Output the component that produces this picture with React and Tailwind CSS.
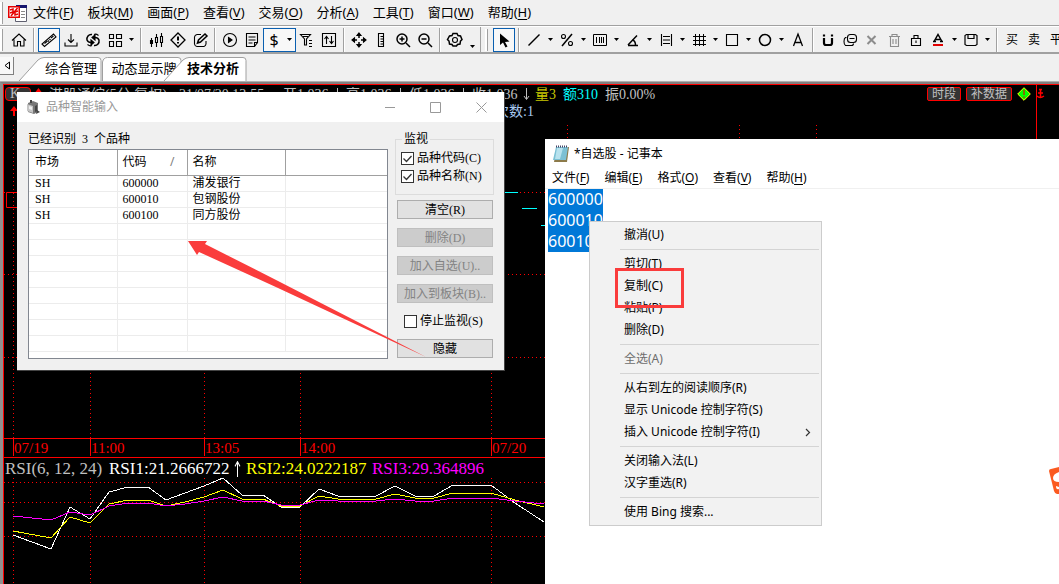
import React from "react";
import clsx from "clsx";

const MENUS = [
  ["文件", "F"],
  ["板块", "M"],
  ["画面", "P"],
  ["查看", "V"],
  ["交易", "O"],
  ["分析", "A"],
  ["工具", "T"],
  ["窗口", "W"],
  ["帮助", "H"],
];

const NOTEPAD_MENUS = [
  ["文件", "F"],
  ["编辑", "E"],
  ["格式", "O"],
  ["查看", "V"],
  ["帮助", "H"],
];

const STOCKS = [
  ["SH", "600000", "浦发银行"],
  ["SH", "600010", "包钢股份"],
  ["SH", "600100", "同方股份"],
];

const EMPTY_ROWS = 8;

const CONTEXT_MENU = [
  [{ label: "撤消(U)" }],
  [{ label: "剪切(T)" }, { label: "复制(C)" }, { label: "粘贴(P)" }, { label: "删除(D)" }],
  [{ label: "全选(A)", disabled: true }],
  [{ label: "从右到左的阅读顺序(R)" }, { label: "显示 Unicode 控制字符(S)" }, { label: "插入 Unicode 控制字符(I)", sub: true }],
  [{ label: "关闭输入法(L)" }, { label: "汉字重选(R)" }],
  [{ label: "使用 Bing 搜索..." }],
];

const RSI1 = "13,535 51,549 70,507 90,519 109,492 128,487 148,487 166,500 185,493 204,486 223,478 242,495 263,495 281,507 300,507 319,489 338,496 376,496 395,486 415,496 434,496 453,485 491,485 515,503 544,522";
const RSI2 = "13,531 51,538 70,517 90,523 109,504 128,500 148,500 166,506 185,502 204,497 223,490 242,499 263,499 281,506 300,506 319,496 338,499 376,499 395,494 415,498 434,498 453,493 491,493 515,500 544,507";
const RSI3 = "13,516 51,520 70,512 90,515 109,506 128,503 148,503 166,506 185,504 204,501 223,497 242,501 263,501 281,505 300,505 319,500 338,501 376,501 395,499 415,501 434,501 453,498 491,498 515,501 544,504";

const TIMES = [
  [13, "07/19"],
  [90, "11:00"],
  [204, "13:05"],
  [300, "14:00"],
  [491, "07/20"],
];

// 18x18 toolbar glyphs
const ICONS = {
  home: <path d="M2 9.500 9 3l7 6.500M4 8.500V15h3.500v-4.500h3V15H14V8.500" />,
  link: <><path d="m2 13 2.500 2.500L16 6l-2.500-3z" /><path d="m4.500 12.500 3-2.500M8 9.500l1 1M9.500 8l1 1M11 7l2.500-2" /></>,
  download: <path d="M9 3v8M6 8.500 9 11.500l3-3M3 11.500v3.500h12v-3.500" />,
  refresh: <><path strokeWidth="1.500" d="M8 3.500C4.500 3 2.500 6 3 9q1 2.500 4 2.500M10 14.500c3.500.5 5.500-2.500 5-5.500q-1-2.500-4-2.500" /><path fill="currentColor" d="m7 9 3 2.500L7 14zM11 4 8 6.500 11 9z" /><path d="M10 3.500q2-1 4.500 1M8 14.500q-2 1-4.500-1" /></>,
  grid: <path d="M3.500 3.500h4v4h-4zM10.500 3.500h5v4h-5zM3.500 10.500h4v5h-4zM10.500 10.500h5v5h-5z" />,
  candles: <><path d="M4.500 7v9M9.500 3v3M9.500 12v4M14.500 2v3M14.500 12v4" /><path d="M8.500 6.500h2v5h-2zM13.500 5.500h2v6h-2z" /><path fill="currentColor" d="M3.500 9.500h2v3h-2z" /></>,
  alert: <><path d="m9 2 7 7-7 7-7-7z" strokeWidth="1.300" /><path d="M9 5.500v4M9 11v1.500" strokeWidth="2" /></>,
  edit: <><path d="M10 3.500H6A3 3 0 0 0 3.500 6v7A3 3 0 0 0 6 15.500h7A3 3 0 0 0 15 13v-3" /><path strokeWidth="1.500" d="m6.500 12 1-3L14 3l2 2-6.500 6z" /></>,
  play: <><circle cx="9" cy="9" r="6.500" /><path fill="currentColor" d="m7.500 6.500 3.500 2.500-3.500 2.500z" /></>,
  note: <path d="M3.500 2.500h11v9l-3 4h-8zM5.500 6h7M5.500 9h7M5.500 12h4M11.500 15v-3.500h3" />,
  filter: <path d="M2.500 3.500h10l-4 4.500v6h-2V8zM5 5.500h5M11 9.500h3M11 12.500h3M11 15.500h3" />,
  updown: <><path d="M2.500 2.500h13v13h-13z" /><path d="M6.500 13V5.500M4.500 8l2-2.500L8.500 8M11.500 5v7.500M9.500 10l2 2.500 2-2.500" /></>,
  move: <><path d="M9 3v4M9 11v4M3 9h4M11 9h4" strokeWidth="1.500" /><path fill="currentColor" d="m9 2 2 2.500H7zM9 16l2-2.500H7zM2 9l2.500-2v4zM16 9l-2.500-2v4z" /></>,
  ruler: <path d="M6.500 2.500h5v13h-5zM8.500 5.500h3M8.500 8h3M8.500 10.500h3M8.500 13h3" />,
  zoomIn: <><circle cx="8" cy="8" r="5" strokeWidth="1.500" /><path d="M5.500 8h5M8 5.500v5M12 12l4 4" strokeWidth="1.500" /></>,
  zoomOut: <><circle cx="8" cy="8" r="5" strokeWidth="1.500" /><path d="M5.500 8h5M12 12l4 4" strokeWidth="1.500" /></>,
  gear: <><path strokeWidth="1.500" d="M7 2.500h4l1 2 2.500.5 1.500 3.500-1.500 1.500-.5 3-2.500.5-1 1.500H7l-1-1.500-2.500-.5-.5-3L1.500 8.500 3.500 5 6 4.500z" /><circle cx="9" cy="9" r="2.500" /></>,
  pointer: <path fill="currentColor" stroke="none" d="M5 2.500v11.500l3-2.500 2.500 5 2-1-2.500-4.500 4.500-.5z" />,
  line: <path strokeWidth="1.500" d="M3.500 14.500 14.500 3.500" />,
  percent: <><circle cx="5.500" cy="5.500" r="2" /><circle cx="12.500" cy="12.500" r="2" /><path strokeWidth="1.500" d="M4 15 14 3" /></>,
  bars: <path strokeWidth="1" d="M2.500 3.500h13v11h-13zM5.500 6v6M8.500 6v6M10.500 6v6M12.500 6v6" />,
  angle: <><path strokeWidth="1.500" d="M4 14.500h10M4 14l9-9.500" /><path strokeWidth="1.500" d="M8.500 9q3 1 3 5" /></>,
  channel: <path d="M4.500 3v12M14.500 3v12M6 5.500h7M6 9h7M6 12.500h7" />,
  hash: <path strokeWidth="1" d="M5.500 3v12M9.500 3v12M13.500 3v12M3 5.500h13M3 9.500h13M3 13.500h13" />,
  square: <path d="M3.500 3.500h11v11h-11z" />,
  circle: <circle cx="9" cy="9" r="5.500" strokeWidth="1.500" />,
  text: <path strokeWidth="1.300" d="m4.500 15 4.500-12 4.500 12M6 11.500h6" />,
  magnet: <><path strokeWidth="2.200" d="M5 7v5c0 1 1 2 2 2h4c1 0 2-1 2-2V7" /><path strokeWidth="2.200" d="M5 3.500v2M13 3.500v2" /></>,
  stack: <><rect x="6.500" y="3.500" width="9" height="8" rx="3" /><path d="M5.500 6.500h-1c-2 1-2 7 0 8h6c1 0 2-1 2-2M8.500 7.500h5" /></>,
  cross: <path strokeWidth="2" d="m4.500 5 8 8M12.500 5l-8 8" />,
  trash: <path d="M4 5.500h11M7 5V3.500h5V5M5.500 6v9.500h8V6M8 8v5M11 8v5" />,
  lock: <path d="M4.500 7.500h9v7h-9zM7 7V4.500h4V7M9 9.500V12" />,
  fontColor: <><path strokeWidth="1.500" d="m5 10.500 4-7 4 7M6.500 8.500h5M4 10.500h3M11 10.500h3" /><path stroke="#e00000" strokeWidth="2" d="M4 14h10" /></>,
  save: <path strokeWidth="1.200" d="M4.500 3.500h9l1.500 1v9l-1.500 1h-9l-1.500-1v-9zM6 4v3.500h6V4" />,
};

function Glyph({ name }) {
  return (
    <svg className="size-[18px] shrink-0" viewBox="0 0 18 18" fill="none" stroke="currentColor" strokeWidth="1.1">
      {ICONS[name]}
    </svg>
  );
}

function Caret({ low }) {
  return (
    <button type="button" aria-label="更多" className={clsx("flex h-6 shrink-0 justify-center", low ? "w-3 items-end pb-1" : "w-[11px] items-center")}>
      <svg className="h-[3px] w-[5px]" viewBox="0 0 5 3"><path d="M0 0h5L2.500 3z" /></svg>
    </button>
  );
}

function Tool({ icon, active, muted, caret, children }) {
  return (
    <>
      <button
        type="button"
        aria-label={icon}
        className={clsx(
          "flex h-6 w-[22px] shrink-0 items-center justify-center",
          active && "border border-[#0a5fb0] bg-[#f8f8f8]",
          muted ? "text-[#8c8c8c]" : "text-black"
        )}
      >
        {children ?? <Glyph name={icon} />}
      </button>
      {caret && <Caret />}
    </>
  );
}

function Sep() {
  return (
    <div className="flex w-2 shrink-0 justify-center">
      <div className="h-6 w-[2px] border-l border-[#a0a0a0] bg-white" />
    </div>
  );
}

function Grip() {
  return <div className="h-[22px] w-[3px] shrink-0 border-r border-[#a0a0a0] bg-white" />;
}

function MenuItem({ text, hotkey }) {
  return (
    <button type="button" className="shrink-0 whitespace-nowrap">
      {text}(<span className="underline underline-offset-2">{hotkey}</span>)
    </button>
  );
}

function MenuBar() {
  return (
    <nav className="flex h-[26px] shrink-0 items-center border-b border-[#a0a0a0] text-[13px]">
      <div className="flex w-2 shrink-0"><Grip /></div>
      <svg className="h-5 w-[19px] shrink-0" viewBox="0 0 19 20">
        <path fill="#fff" stroke="#606070" d="M7.500 3.500h11v15h-11z" />
        <path fill="#16166e" d="M8 2h11v3H8z" />
        <path stroke="#888" d="M13 8.500h4M13 11.500h4M13 14.500h4" />
        <path fill="#e60000" d="M0 3h12v12H0z" />
        <path fill="#fff" d="M1.500 4.500h9v9h-9z" />
        <path fill="none" stroke="#e60000" strokeWidth="1.500" d="M3 13 9.500 5M2 7l3-1v3L2 10M10 8l-3 1v3l3-1" />
      </svg>
      <div className="flex gap-[14px] pl-[6px]">
        {MENUS.map(([t, k]) => <MenuItem key={t} text={t} hotkey={k} />)}
      </div>
    </nav>
  );
}

function Toolbar() {
  return (
    <div className="flex h-7 shrink-0 overflow-hidden border-b-2 border-[#a0a0a0] border-t border-t-white">
      <div className="flex shrink-0 items-center border-r border-[#a0a0a0] pr-[2px]">
        <div className="flex w-2 shrink-0"><Grip /></div>
        <Tool icon="home" />
        <Sep />
        <Tool icon="link" active />
        <Tool icon="download" />
        <Tool icon="refresh" />
        <Tool icon="grid" caret />
        <Sep />
        <Tool icon="candles" />
        <Tool icon="alert" />
        <Tool icon="edit" />
        <Sep />
        <Tool icon="play" />
        <Tool icon="note" />
        <div className="flex h-6 w-[33px] shrink-0 items-center border border-[#0a5fb0] bg-[#f8f8f8]">
          <button type="button" className="flex-1 text-base leading-4">$</button>
          <Caret />
        </div>
        <Tool icon="filter" />
        <Tool icon="updown" />
        <Sep />
        <Tool icon="move" />
        <Tool icon="ruler" />
        <Tool icon="zoomIn" />
        <Tool icon="zoomOut" />
        <Sep />
        <Tool icon="gear" />
        <Caret low />
      </div>
      <div className="flex shrink-0 items-center pl-1">
        <div className="flex w-2 shrink-0"><Grip /></div>
        <Tool icon="pointer" active />
        <Sep />
        <Tool icon="line" caret />
        <Tool icon="percent" caret />
        <Tool icon="bars" caret />
        <Tool icon="angle" caret />
        <Tool icon="channel" caret />
        <Tool icon="hash" caret />
        <Tool icon="square" caret />
        <Tool icon="circle" caret />
        <Tool icon="text" />
        <Sep />
        <Tool icon="magnet" />
        <Tool icon="stack" />
        <Tool icon="cross" muted />
        <Tool icon="trash" muted />
        <Tool icon="lock" />
        <Tool icon="fontColor" caret />
        <Tool icon="save" caret />
        <Sep />
        <Tool icon="buy"><span className="text-xs">买</span></Tool>
        <Tool icon="sell"><span className="text-xs">卖</span></Tool>
        <Tool icon="close"><span className="text-xs">平</span></Tool>
      </div>
    </div>
  );
}

function Tabs() {
  return (
    <div className="flex h-7 shrink-0 items-end border-b border-[#b0b0b0] text-[13px]">
      <button type="button" aria-label="向左" className="mb-[6px] flex h-[18px] w-[14px] shrink-0 items-center justify-center border-r border-b border-[#808080] bg-[#f8f8f8]">
        <svg className="h-[9px] w-[6px]" viewBox="0 0 6 9"><path fill="none" stroke="#000" d="M5.500 1v7L1 4.500z" /></svg>
      </button>
      <button type="button" className="relative ml-1 h-6 w-[84px] pl-[22px]">
        <svg className="absolute inset-0 h-full w-full" viewBox="0 0 84 24"><path fill="#fff" stroke="#a0a0a0" d="M1 24 20 3q3-2.500 6-2.500h54q3 0 3 3V24" /></svg>
        <span className="relative">综合管理</span>
      </button>
      <button type="button" className="relative h-6 w-20 whitespace-nowrap pl-1">
        <svg className="absolute inset-0 h-full w-full" viewBox="0 0 80 24"><path fill="#fff" stroke="#a0a0a0" d="M.5 24V5q1-4.500 5-4.500H76q3 0 3 3V24" /></svg>
        <span className="relative">动态显示牌</span>
      </button>
      <button type="button" className="relative -ml-[19px] h-6 w-[84px] pl-4 font-bold">
        <svg className="absolute inset-0 h-full w-full" viewBox="0 0 84 24"><path fill="#fff" stroke="#a0a0a0" d="M1 24 20 3q3-2.500 6-2.500h54q3 0 3 3V24" /></svg>
        <span className="relative">技术分析</span>
      </button>
    </div>
  );
}

function DotH({ y, from = 4, to = 1059 }) {
  return <line x1={from} x2={to} y1={y + 0.5} y2={y + 0.5} stroke="#f00" strokeDasharray="1 3" />;
}

function DotV({ x, from, to }) {
  return <line x1={x + 0.5} x2={x + 0.5} y1={from} y2={to} stroke="#f00" strokeDasharray="1 3" />;
}

function DownArrow({ up }) {
  return (
    <svg className={clsx("shrink-0", up ? "h-4 w-[7px] rotate-180" : "h-3 w-[7px]")} viewBox="0 0 7 12" preserveAspectRatio="none" fill="none" stroke="currentColor">
      <path d="M3.500 0v11M1 8l2.500 3.500L6 8" />
    </svg>
  );
}

function PriceField({ label }) {
  return (
    <span className="flex w-[63px] shrink-0 items-center whitespace-nowrap">
      <span className="w-[51px]">{label}1.036</span>
      <DownArrow />
    </span>
  );
}

function PricePane() {
  return (
    <section className="relative h-[353px] shrink-0">
      <svg className="absolute inset-0 h-full w-full" fill="none">
        <g transform="translate(-4 -85)">
          <DotH y={192} />
          <DotH y={274} />
          <DotH y={357} />
          {[13, 90, 204, 300, 491, 567, 739, 816].map((x) => <DotV key={x} x={x} from={125} to={438} />)}
          <path stroke="#f00" d="M1036.500 85v354M20 192.500H6.500v15H20" />
          <path stroke="#0ff" d="M504 192.500h14M522 208.500h15M541 225.500h8" />
          <path fill="#f00" d="m14 106 4 5h-3v5h-2v-5h-3z" />
        </g>
      </svg>
      <div className="relative flex h-[18px] items-center text-[14px] text-[#c0c0c0]">
        <button type="button" className="ml-[1px] h-[14px] w-[26px] shrink-0 rounded-sm border border-[#f00] bg-[#333] pl-1 text-left leading-3">K</button>
        <svg className="mx-[3px] h-3 w-[9px] shrink-0" viewBox="0 0 9 12"><path fill="#f00" d="m4.500 0 3 4h-6zM4.500 12l3-4h-6z" /></svg>
        <span className="w-[133px] shrink-0 whitespace-nowrap pl-[3px]">港股通综(5分 复权)</span>
        <span className="w-[104px] shrink-0 whitespace-nowrap">21/07/20 13:55</span>
        <PriceField label="开" />
        <PriceField label="高" />
        <PriceField label="低" />
        <PriceField label="收" />
        <span className="w-7 shrink-0 text-[#c8c800]">量3</span>
        <span className="w-[42px] shrink-0 text-[#0ff]">额310</span>
        <span className="shrink-0">振0.00%</span>
        <div className="ml-auto mr-[14px] flex shrink-0 items-center gap-[5px] text-xs">
          <button type="button" className="h-[14px] rounded-xs border border-[#f00] bg-[#333] px-1 leading-3">时段</button>
          <button type="button" className="h-[14px] rounded-xs border border-[#f00] bg-[#333] px-1 leading-3">补数据</button>
          <svg className="h-[14px] w-[14px]" viewBox="0 0 14 14">
            <path fill="#0f0" stroke="#ff0" d="m7 .7 6.300 6.300L7 13.300.7 7z" />
            <path stroke="#b04000" strokeWidth="1.500" d="M7 3v5M7 9.500V11" />
          </svg>
          <svg className="h-3 w-[9px]" viewBox="0 0 9 12" fill="none" stroke="#f00" strokeWidth="1.500">
            <path d="M4.500 2v8M2 5h5M1 8q3 3 7 0M3 1.500h3" />
          </svg>
        </div>
      </div>
      <div className="relative pl-[491px] text-[14px] leading-[18px] text-[#a8c8f0]">次数:1</div>
    </section>
  );
}

function TimeAxis() {
  return (
    <div className="relative h-5 shrink-0 border-y border-[#f00]">
      <svg className="absolute inset-0 h-full w-full">
        <g transform="translate(-4 0)">
          {TIMES.map(([x, label]) => (
            <g key={label}>
              <path stroke="#f00" d={`M${x + 0.5} 0v17`} />
              <text x={x + 1} y="14" fill="#f00" fontSize="15">{label}</text>
            </g>
          ))}
        </g>
      </svg>
    </div>
  );
}

function RsiPane() {
  return (
    <section className="relative min-h-0 flex-1">
      <svg className="absolute inset-0 h-full w-full" fill="none" shapeRendering="crispEdges">
        <g transform="translate(-4 -458)">
          <DotH y={482} />
          <DotH y={502} />
          <DotH y={536} />
          {TIMES.map(([x]) => <DotV key={x} x={x} from={478} to={584} />)}
          <polyline points={RSI1} stroke="#fff" />
          <polyline points={RSI2} stroke="#ff0" />
          <polyline points={RSI3} stroke="#f0f" />
        </g>
      </svg>
      <div className="relative flex h-[22px] items-center whitespace-nowrap pl-[1px] text-[17px]">
        <span className="w-[104px] shrink-0 text-[#c0c0c0]">RSI(6, 12, 24)</span>
        <span className="flex w-[137px] shrink-0 items-center justify-between pr-[5px] text-white">RSI1:21.2666722<DownArrow up /></span>
        <span className="w-[126px] shrink-0 text-[#ff0]">RSI2:24.0222187</span>
        <span className="text-[#f0f]">RSI3:29.364896</span>
      </div>
    </section>
  );
}

function StockTable() {
  return (
    <table className="w-full table-fixed border-collapse text-left text-xs leading-3">
      <colgroup>
        <col className="w-[88px]" />
        <col className="w-[70px]" />
        <col className="w-[98px]" />
        <col />
      </colgroup>
      <thead className="font-['Noto_Sans','Noto_Sans_CJK_SC',sans-serif]">
        <tr className="h-[25px] border-b border-[#a0a0a0]">
          <th className="border-r border-[#a0a0a0] p-0 pl-[6px] font-normal">市场</th>
          <th className="border-r border-[#a0a0a0] p-0 pl-[5px] font-normal">
            <span className="flex justify-between pr-3">代码<span className="text-[#808080]">/</span></span>
          </th>
          <th className="border-r border-[#a0a0a0] p-0 pl-[5px] font-normal">名称</th>
          <th className="p-0" />
        </tr>
      </thead>
      <tbody>
        {STOCKS.map(([market, code, name]) => (
          <tr key={code} className="h-4 border-b border-[#ececec]">
            <td className="border-r border-[#ececec] p-0 pl-[6px]">{market}</td>
            <td className="border-r border-[#ececec] p-0 pl-[5px]">{code}</td>
            <td className="border-r border-[#ececec] p-0 pl-[5px]">{name}</td>
            <td className="p-0" />
          </tr>
        ))}
        {Array.from({ length: EMPTY_ROWS }, (_, i) => (
          <tr key={i} className="h-4 border-b border-[#ececec]">
            <td className="border-r border-[#ececec] p-0" />
            <td className="border-r border-[#ececec] p-0" />
            <td className="border-r border-[#ececec] p-0" />
            <td className="p-0" />
          </tr>
        ))}
      </tbody>
    </table>
  );
}

function CheckBox({ label, checked }) {
  return (
    <label className="flex h-[18px] items-center gap-[3px] whitespace-nowrap">
      <span className="relative flex size-[13px] shrink-0">
        <input type="checkbox" defaultChecked={checked} className="peer size-[13px] appearance-none border border-[#333] bg-white" />
        <svg className="pointer-events-none absolute inset-0 hidden size-[13px] peer-checked:block" viewBox="0 0 13 13">
          <path fill="none" stroke="#333" strokeWidth="1.300" d="m2.500 6.500 3 3 5-5.500" />
        </svg>
      </span>
      {label}
    </label>
  );
}

function DialogButton({ children, disabled }) {
  return (
    <button
      type="button"
      disabled={disabled}
      className={clsx(
        "h-[19px] w-24 whitespace-nowrap border text-center text-xs leading-4",
        disabled ? "border-[#bfbfbf] bg-[#ccc] text-[#838383]" : "border-[#adadad] bg-[#e1e1e1] text-black"
      )}
    >
      {children}
    </button>
  );
}

function SmartInputDialog() {
  return (
    <div role="dialog" aria-label="品种智能输入" className="absolute top-[10px] left-[17px] w-[488px] border border-t-0 border-[#444] border-l-0 bg-[#f0f0f0] text-xs text-black">
      <div className="flex h-[30px] items-center bg-white font-['Noto_Sans','Noto_Sans_CJK_SC',sans-serif] text-[#999]">
        <svg className="ml-[9px] mr-[6px] size-[14px]" viewBox="0 0 14 14">
          <path fill="#777" d="M2 3 7 1l5 2v9l-4 2-6-2z" />
          <path fill="#c4c4c4" d="m1 4 6 2v7l-6-2z" />
          <path fill="#eee" d="m3 6 3 1v3L3 9z" />
          <path fill="#444" d="M9 6l2-1v6l-2 1zM4 0h2v3H4zM11 10l3 2-4 2z" />
        </svg>
        <span>品种智能输入</span>
        <div className="ml-auto flex">
          <button type="button" aria-label="最小化" className="flex h-7 w-[45px] items-center justify-center">
            <svg className="size-[11px]" viewBox="0 0 11 11"><path stroke="#999" d="M0 5.500h10" /></svg>
          </button>
          <button type="button" aria-label="最大化" className="flex h-7 w-[45px] items-center justify-center">
            <svg className="size-[11px]" viewBox="0 0 11 11"><path fill="none" stroke="#999" d="M.5.500h10v10H.5z" /></svg>
          </button>
          <button type="button" aria-label="关闭" className="flex h-7 w-[46px] items-center justify-center">
            <svg className="size-[11px]" viewBox="0 0 11 11"><path stroke="#999" d="m.5.500 10 10M10.500.500l-10 10" /></svg>
          </button>
        </div>
      </div>
      <div className="flex gap-[7px] pt-[9px] pr-[10px] pb-[11px] pl-[11px]">
        <div className="min-w-0 flex-1">
          <p className="flex h-[18px] gap-[6px] leading-4"><span>已经识别</span><span>3</span><span>个品种</span></p>
          <div className="h-[210px] overflow-hidden border border-[#828790] bg-white">
            <StockTable />
          </div>
        </div>
        <div className="w-[99px] shrink-0">
          <fieldset className="h-[64px] border border-[#dcdcdc] px-[5px] pt-[2px]">
            <legend className="ml-[1px] px-[2px] leading-4">监视</legend>
            <CheckBox label="品种代码(C)" checked />
            <CheckBox label="品种名称(N)" checked />
          </fieldset>
          <div className="mt-[5px] flex flex-col gap-[9px] pl-[2px]">
            <DialogButton>清空(R)</DialogButton>
            <DialogButton disabled>删除(D)</DialogButton>
            <DialogButton disabled>加入自选(U)..</DialogButton>
            <DialogButton disabled>加入到板块(B)..</DialogButton>
            <div className="pl-[7px]"><CheckBox label="停止监视(S)" /></div>
            <DialogButton>隐藏</DialogButton>
          </div>
        </div>
      </div>
    </div>
  );
}

function ContextMenu() {
  return (
    <div role="menu" className="absolute top-[82px] left-[44px] w-[233px] border border-[#ccc] bg-[#f2f2f2] p-[2px] text-xs">
      {CONTEXT_MENU.map((group, i) => (
        <React.Fragment key={i}>
          {i > 0 && <div className="ml-7 flex h-[7px] items-center"><div className="h-px w-full bg-[#d4d4d4]" /></div>}
          {group.map((item) => (
            <button
              key={item.label}
              type="button"
              role="menuitem"
              disabled={item.disabled}
              className={clsx("flex h-[22px] w-full items-center justify-between pr-2 pl-8 text-left", item.disabled && "text-[#6d6d6d]")}
            >
              {item.label}
              {item.sub && <svg className="h-[9px] w-[6px]" viewBox="0 0 6 9"><path fill="none" stroke="#333" strokeWidth="1.200" d="m1 1 3.500 3.500L1 8" /></svg>}
            </button>
          ))}
        </React.Fragment>
      ))}
      <div className="pointer-events-none absolute top-[46px] left-[25px] h-10 w-[69px] border-3 border-[#fa3c3c]" />
    </div>
  );
}

function Notepad() {
  return (
    <div className="absolute top-[57px] right-0 bottom-0 left-[545px] bg-white font-['Noto_Sans','Noto_Sans_CJK_SC',sans-serif] text-xs text-black">
      <div className="flex h-[29px] items-center pl-2">
        <svg className="mr-[5px] h-[17px] w-4" viewBox="0 0 16 17">
          <path fill="#8c7a4a" d="M4 2h12l-2 15H1z" />
          <path fill="#7cc0d4" d="M3 2h12l-2 13H0z" />
          <path fill="#b8e2ee" d="M4 3h6L7 14H2z" />
          <path stroke="#446" strokeDasharray="1 1" strokeWidth="2" d="M3 1.500h12" />
        </svg>
        *自选股 - 记事本
      </div>
      <nav className="flex h-[21px] items-center gap-[15px] border-b border-[#f0f0f0] pl-[7px]">
        {NOTEPAD_MENUS.map(([t, k]) => <MenuItem key={t} text={t} hotkey={k} />)}
      </nav>
      <textarea
        aria-label="文本内容"
        rows={3}
        wrap="off"
        spellCheck={false}
        className="ml-[3px] block w-[55px] resize-none overflow-hidden bg-[#0078d7] p-0 text-base leading-[21px] text-white"
        defaultValue={"600000\n600010\n600100"}
      />
      <ContextMenu />
      <svg className="absolute top-[328px] right-0 h-7 w-[10px]" viewBox="0 0 10 28">
        <path fill="#fb5a20" d="M0 4q0-2 2-2l8-2v27H8q-2 0-3-3z" />
        <path fill="#fff" d="M10 5q-6 2-6 6t6 4zM10 20l-3-1q0 4 3 3z" />
      </svg>
    </div>
  );
}

export default function App() {
  return (
    <div className="flex h-screen flex-col overflow-hidden bg-[#f0f0f0] font-['Noto_Sans','Noto_Sans_CJK_SC',sans-serif] text-black">
      <MenuBar />
      <Toolbar />
      <Tabs />
      <main className="relative min-h-0 flex-1 border-t-2 border-l-[3px] border-[#808080] border-l-[#909090] font-['Liberation_Serif','Noto_Sans_CJK_SC',serif]">
        <div className="flex h-full flex-col overflow-hidden border-t border-l border-[#f00] bg-black">
          <PricePane />
          <TimeAxis />
          <RsiPane />
        </div>
        <div className="absolute -top-[2px] right-0 bottom-0 -left-[3px]">
          <SmartInputDialog />
          <Notepad />
          <svg className="pointer-events-none absolute inset-0 h-full w-full">
            <path fill="#fa3c3c" transform="translate(0 -82)" d="m188 241 19 0-2 3 75 38 146 75-148-69-79-36-2 3z" />
          </svg>
        </div>
      </main>
    </div>
  );
}
